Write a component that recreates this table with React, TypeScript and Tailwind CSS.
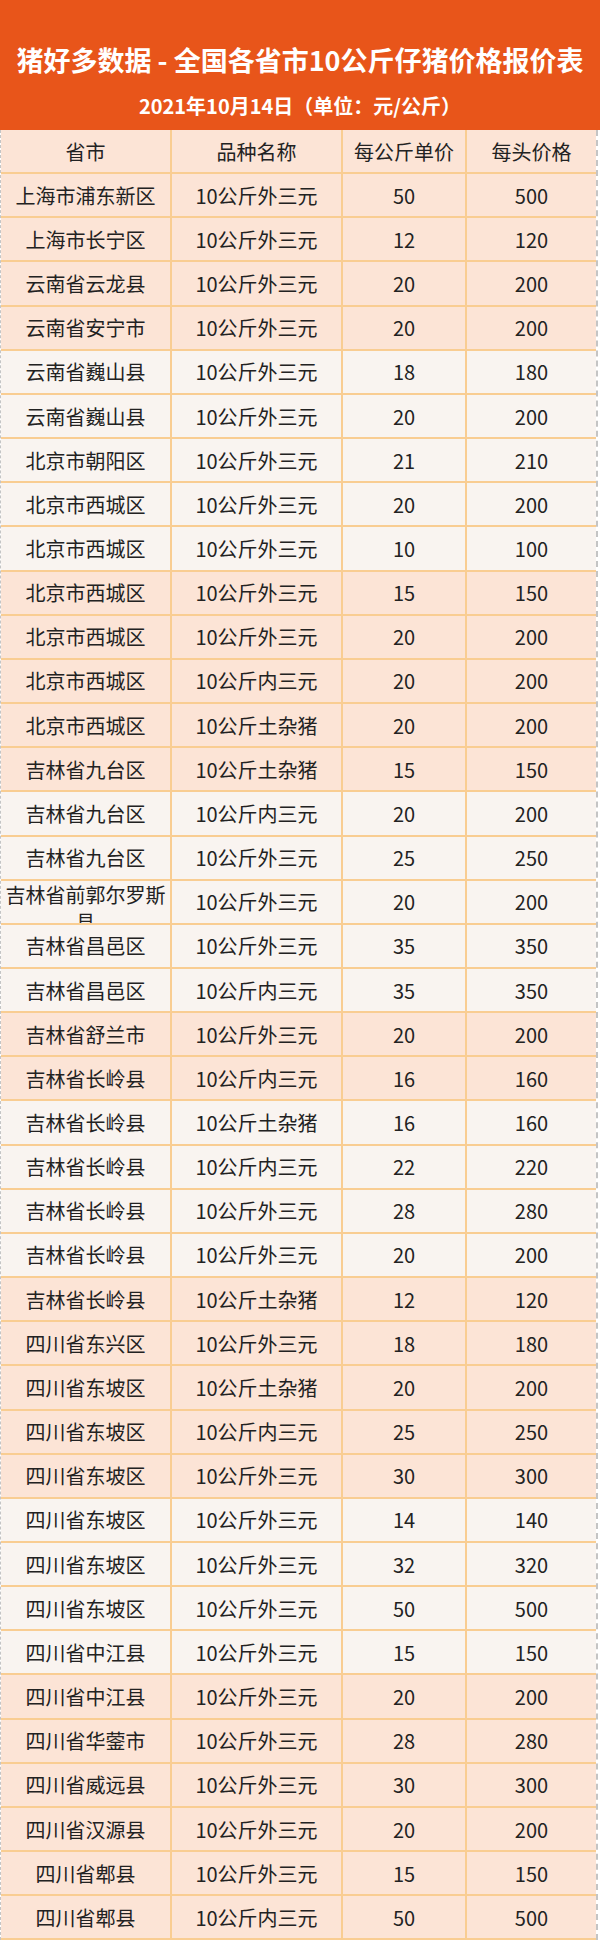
import React from 'react';

type Row = [string, string, number, number, boolean];

// [省市, 品种, 每公斤单价, 每头价格, 深色底]
const ROWS: Row[] = [
  ['上海市浦东新区', '10公斤外三元', 50, 500, true],
  ['上海市长宁区', '10公斤外三元', 12, 120, true],
  ['云南省云龙县', '10公斤外三元', 20, 200, true],
  ['云南省安宁市', '10公斤外三元', 20, 200, true],
  ['云南省巍山县', '10公斤外三元', 18, 180, false],
  ['云南省巍山县', '10公斤外三元', 20, 200, false],
  ['北京市朝阳区', '10公斤外三元', 21, 210, false],
  ['北京市西城区', '10公斤外三元', 20, 200, false],
  ['北京市西城区', '10公斤外三元', 10, 100, false],
  ['北京市西城区', '10公斤外三元', 15, 150, true],
  ['北京市西城区', '10公斤外三元', 20, 200, true],
  ['北京市西城区', '10公斤内三元', 20, 200, true],
  ['北京市西城区', '10公斤土杂猪', 20, 200, true],
  ['吉林省九台区', '10公斤土杂猪', 15, 150, true],
  ['吉林省九台区', '10公斤内三元', 20, 200, false],
  ['吉林省九台区', '10公斤外三元', 25, 250, false],
  ['吉林省前郭尔罗斯县', '10公斤外三元', 20, 200, false],
  ['吉林省昌邑区', '10公斤外三元', 35, 350, false],
  ['吉林省昌邑区', '10公斤内三元', 35, 350, false],
  ['吉林省舒兰市', '10公斤外三元', 20, 200, true],
  ['吉林省长岭县', '10公斤内三元', 16, 160, true],
  ['吉林省长岭县', '10公斤土杂猪', 16, 160, false],
  ['吉林省长岭县', '10公斤内三元', 22, 220, false],
  ['吉林省长岭县', '10公斤外三元', 28, 280, false],
  ['吉林省长岭县', '10公斤外三元', 20, 200, false],
  ['吉林省长岭县', '10公斤土杂猪', 12, 120, true],
  ['四川省东兴区', '10公斤外三元', 18, 180, true],
  ['四川省东坡区', '10公斤土杂猪', 20, 200, true],
  ['四川省东坡区', '10公斤内三元', 25, 250, true],
  ['四川省东坡区', '10公斤外三元', 30, 300, true],
  ['四川省东坡区', '10公斤外三元', 14, 140, false],
  ['四川省东坡区', '10公斤外三元', 32, 320, false],
  ['四川省东坡区', '10公斤外三元', 50, 500, false],
  ['四川省中江县', '10公斤外三元', 15, 150, false],
  ['四川省中江县', '10公斤外三元', 20, 200, true],
  ['四川省华蓥市', '10公斤外三元', 28, 280, true],
  ['四川省威远县', '10公斤外三元', 30, 300, true],
  ['四川省汉源县', '10公斤外三元', 20, 200, true],
  ['四川省郫县', '10公斤外三元', 15, 150, true],
  ['四川省郫县', '10公斤内三元', 50, 500, true],
];

const Cell: React.FC<{ w: string; last?: boolean; children: React.ReactNode }> = ({ w, last, children }) => (
  <div
    className={`${w} h-full flex justify-center [align-items:safe_center] overflow-hidden px-[3px] text-center ${
      last ? '' : 'border-r-2 border-[#f9cd92]'
    }`}
  >
    <span className="block w-full">{children}</span>
  </div>
);

const TableRow: React.FC<{ cells: React.ReactNode[]; dark: boolean }> = ({ cells, dark }) => (
  <div className={`flex h-[44.17px] border-b-2 border-[#f9cd92] ${dark ? 'bg-[#fce4d6]' : 'bg-[#f9f4f0]'}`}>
    <Cell w="w-[171px]">{cells[0]}</Cell>
    <Cell w="w-[171px]">{cells[1]}</Cell>
    <Cell w="w-[124px]">{cells[2]}</Cell>
    <Cell w="flex-1" last>{cells[3]}</Cell>
  </div>
);

export default function App() {
  return (
    <div className="w-[600px] bg-white text-[#222] font-['Noto_Sans_CJK_SC','Noto_Sans',sans-serif]">
      {/* 标题 */}
      <header className="h-[130px] bg-[#e8551a] text-white font-bold text-center pt-[42px]">
        <h1 className="text-[27px] leading-[36px] whitespace-nowrap">猪好多数据 - 全国各省市10公斤仔猪价格报价表</h1>
        <p className="mt-[15px] text-[20px] leading-[26px]">2021年10月14日（单位：元/公斤）</p>
      </header>

      {/* 表格 */}
      <div className="mr-[2px] border-l border-r-2 border-dashed border-[#c4c4c4] text-[20px] leading-[27px]">
        <TableRow dark cells={['省市', '品种名称', '每公斤单价', '每头价格']} />
        {ROWS.map((r, i) => (
          <TableRow key={i} dark={r[4]} cells={[r[0], r[1], r[2], r[3]]} />
        ))}
      </div>
    </div>
  );
}
